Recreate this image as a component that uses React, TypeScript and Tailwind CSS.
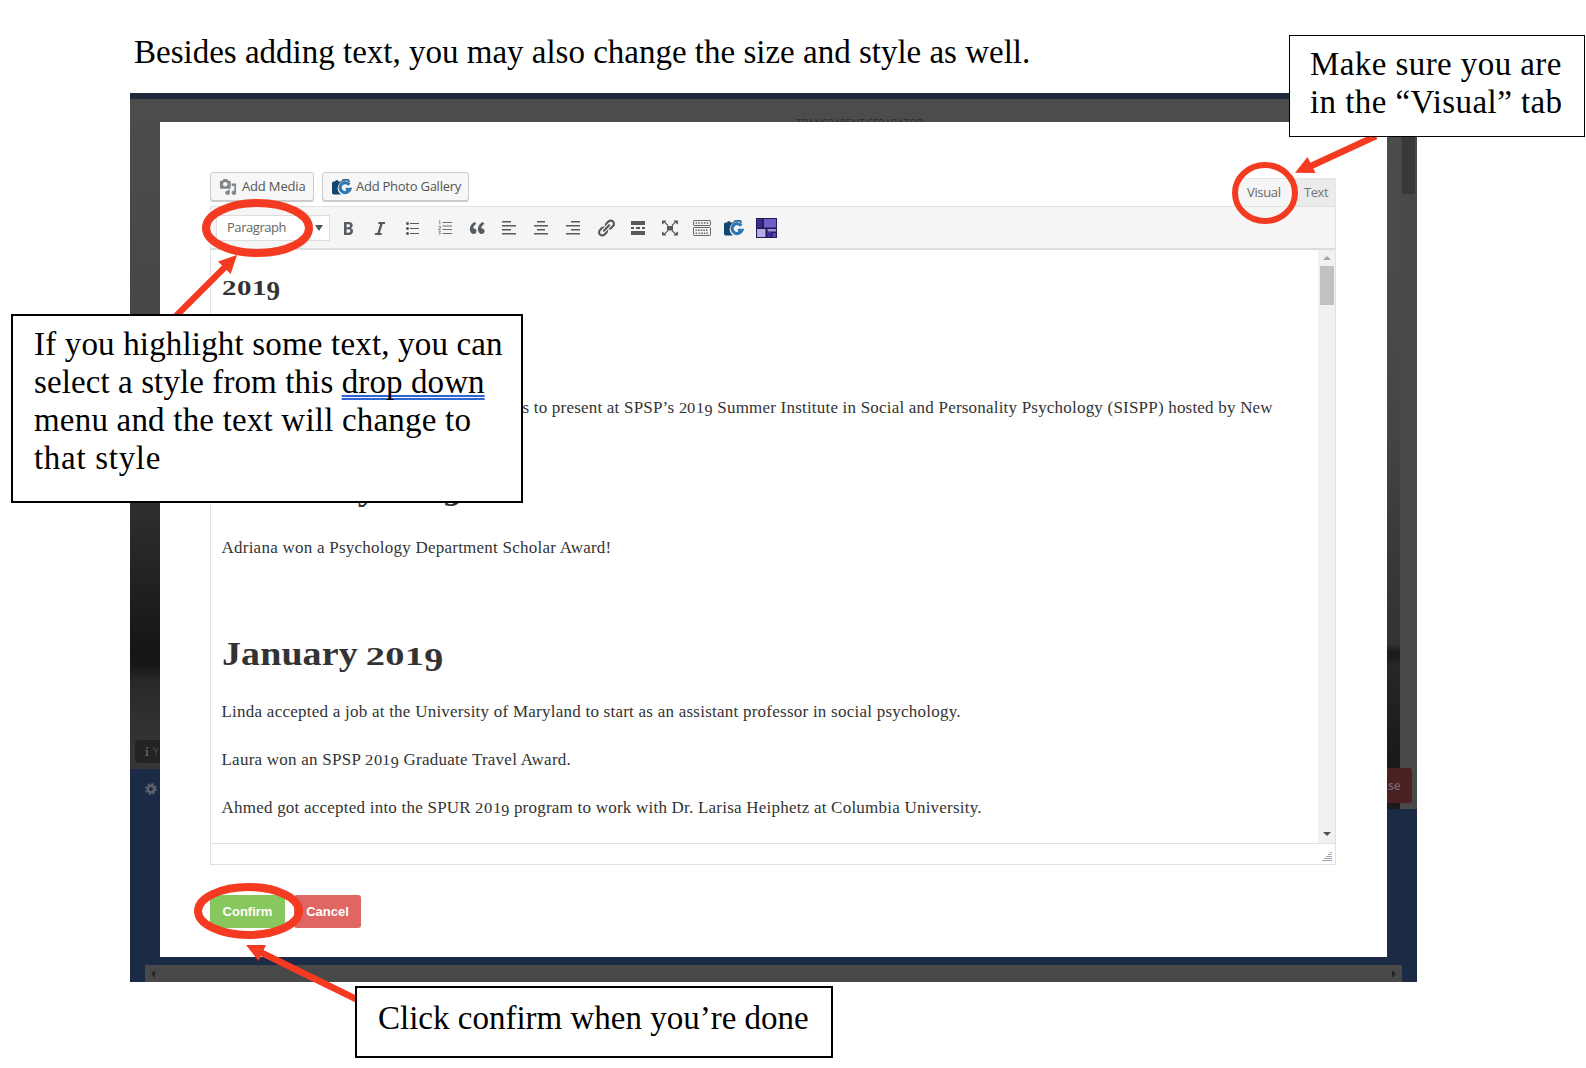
import React, { ReactNode } from "react";

const DASH = {
  bold: "M6 4v13h4.54c1.37 0 2.46-.33 3.26-1 .8-.66 1.2-1.58 1.2-2.77 0-.84-.17-1.51-.51-2.01s-.9-.85-1.67-1.03v-.09c.57-.1 1.02-.4 1.36-.9s.51-1.13.51-1.91c0-1.14-.39-1.98-1.17-2.5C12.75 4.26 11.5 4 9.78 4H6zm2.57 5.15V6.26h1.36c.73 0 1.27.11 1.61.32.34.22.51.58.51 1.07 0 .54-.16.92-.47 1.15s-.82.35-1.51.35h-1.5zm0 2.19h1.6c1.44 0 2.16.53 2.16 1.61 0 .6-.17 1.05-.51 1.34s-.86.43-1.57.43H8.57v-3.38z",
  italic: "M14.78 6h-2.13l-2.8 9h2.12l-.62 2H4.6l.62-2h2.14l2.8-9H8.03l.62-2h6.75z",
  ul: "M5.5 7C4.67 7 4 6.33 4 5.5 4 4.68 4.67 4 5.5 4 6.32 4 7 4.68 7 5.5 7 6.33 6.32 7 5.5 7zM8 5h9v1H8V5zm-2.5 7c-.83 0-1.5-.67-1.5-1.5C4 9.68 4.67 9 5.5 9c.82 0 1.5.68 1.5 1.5 0 .83-.68 1.5-1.5 1.5zM8 10h9v1H8v-1zm-2.5 7c-.83 0-1.5-.67-1.5-1.5 0-.82.67-1.5 1.5-1.5.82 0 1.5.68 1.5 1.5 0 .83-.68 1.5-1.5 1.5zM8 15h9v1H8v-1z",
  quote: "M9.49 13.22c0-.74-.2-1.38-.61-1.9-.62-.78-1.83-.88-2.53-.72-.29-1.65 1.11-3.75 2.92-4.65L7.88 4c-2.73 1.3-5.42 4.28-4.96 8.05C3.21 14.43 4.59 16 6.54 16c.85 0 1.56-.25 2.12-.75s.83-1.18.83-2.03zm8.05 0c0-.74-.2-1.38-.61-1.9-.63-.78-1.83-.88-2.53-.72-.29-1.65 1.11-3.75 2.92-4.65L15.93 4c-2.73 1.3-5.41 4.28-4.95 8.05.28 2.38 1.66 3.95 3.61 3.95.85 0 1.56-.25 2.12-.75s.83-1.18.83-2.03z",
  left: "M12 4.6V3H3v1.6h9zm5 4V7H3v1.6h14zm-5 4V11H3v1.6h9zm5 4V15H3v1.6h14z",
  center: "M14 4.6V3H6v1.6h8zm3 4V7H3v1.6h14zm-3 4V11H6v1.6h8zm3 4V15H3v1.6h14z",
  right: "M17 4.6V3H8v1.6h9zm0 4V7H3v1.6h14zm0 4V11H8v1.6h9zm0 4V15H3v1.6h14z",
  link: "M17.74 2.76c1.68 1.69 1.68 4.41 0 6.1l-1.53 1.52c-1.12 1.12-2.7 1.47-4.14 1.09l2.62-2.61.76-.77.76-.76c.84-.84.84-2.2 0-3.04-.84-.85-2.2-.85-3.04 0l-.77.76-3.38 3.38c-.37-1.44-.02-3.02 1.1-4.14l1.52-1.53c1.69-1.68 4.42-1.68 6.1 0zM8.59 13.43l5.34-5.34c.42-.42.42-1.1 0-1.52-.44-.43-1.13-.39-1.53 0l-5.33 5.34c-.42.42-.42 1.1 0 1.52.44.43 1.13.39 1.52 0zm-.76 2.29l4.14-4.15c.38 1.44.03 3.02-1.09 4.14l-1.52 1.53c-1.69 1.68-4.41 1.68-6.1 0-1.68-1.68-1.68-4.42 0-6.1l1.53-1.52c1.12-1.12 2.7-1.47 4.14-1.1l-4.14 4.15c-.85.84-.85 2.2 0 3.05.84.84 2.2.84 3.04 0z",
  more: "M17 7V3H3v4h14zM6 11V9H3v2h3zm6 0V9H8v2h4zm5 0V9h-3v2h3zm0 6v-4H3v4h14z",
  media: "M13 11V4c0-.55-.45-1-1-1h-1.67L9 1H5L3.67 3H2c-.55 0-1 .45-1 1v7c0 .55.45 1 1 1h10c.55 0 1-.45 1-1zM7 4.5c1.38 0 2.5 1.12 2.5 2.5S8.38 9.5 7 9.5 4.5 8.38 4.5 7 5.62 4.5 7 4.5zM14 6h5v10.5c0 1.38-1.12 2.5-2.5 2.5S14 17.88 14 16.5s1.12-2.5 2.5-2.5c.17 0 .34.02.5.05V9h-3V6zm-4 8.05V13h2v3.5c0 1.38-1.12 2.5-2.5 2.5S7 17.88 7 16.5 8.12 14 9.5 14c.17 0 .34.02.5.05z",
};

function Glyph({ d }: { d: string }) {
  return (
    <svg viewBox="0 0 20 20" className="size-5 fill-[#555b61]">
      <path d={d} />
    </svg>
  );
}

function OrderedList() {
  return (
    <svg viewBox="0 0 20 20" className="size-5" fill="none" stroke="#6b7177">
      <path d="M7.500 4.500h9.500M7.500 8h9.500M7.500 11.500h9.500M7.500 15.500h9.500" strokeWidth="1" />
      <path d="M3.8 3.4l1-.6v3.7M3.5 8.5h2v1.4l-2 1.3h2.2M3.5 13h2l-1 1.5c1.6 0 1.4 2-.9 1.6" strokeWidth=".8" />
    </svg>
  );
}

function Fullscreen() {
  return (
    <svg viewBox="0 0 20 20" className="size-5 fill-[#555b61]">
      <path d="M7 8h6v4.500H7z" />
      <path d="M2 2.500h4.500L5.300 3.900l3.200 3.200-.8.800-3.200-3.200L2 6.500zM18 2.500h-4.500l1.200 1.400-3.200 3.200.8.800 3.200-3.200L18 6.500zM2 17.500h4.500l-1.200-1.400 3.200-3.200-.8-.8-3.200 3.200L2 13.500zM18 17.500h-4.500l1.200-1.400-3.200-3.200.8-.8 3.200 3.200L18 13.500z" />
    </svg>
  );
}

function KitchenSink() {
  return (
    <svg viewBox="0 0 20 20" className="size-5" fill="none" stroke="#62686e">
      <rect x="1.500" y="2.500" width="17" height="5" rx=".6" strokeWidth="1" />
      <rect x="1.500" y="9.500" width="17" height="8" rx=".6" strokeWidth="1" />
      <path d="M3.500 5h13" strokeWidth="1.600" strokeDasharray="1.600 1.200" />
      <path d="M3.500 12.200h13M3.500 15.200h2M6.600 15.200h6.600M14.200 15.200h2.400" strokeWidth="1.600" strokeDasharray="1.600 1" />
    </svg>
  );
}

function CameraG() {
  return (
    <svg viewBox="0 0 20 18" className="h-[18px] w-5">
      <path d="M1.500 3.400h1.700l.4-1.200h2.400l.4 1.200h2.500L11 1h5.500l1.500 2.200-1 5.800-8 7.500H1.800Q0 16.500 0 14.500V5.400Q0 3.400 1.500 3.400z" fill="#12456f" />
      <ellipse cx="13.200" cy="10.300" rx="7.600" ry="7.500" fill="#f7f7f7" />
      <path d="M17.300 6.700A5.100 4.900 0 1 0 18 11.300h-4.200" fill="none" stroke="#2f78b3" strokeWidth="3.200" />
      <path d="M10.500 2.200h5l1.500 1.600" fill="none" stroke="#5f93bf" strokeWidth="1.200" />
    </svg>
  );
}

function Mosaic() {
  return (
    <svg viewBox="0 0 20 20" className="h-[20px] w-[21px]" preserveAspectRatio="none">
      <path d="M0 0h20v20H0z" fill="#241a55" />
      <path d="M1 1h4.500v8.500H1zM10.500 14h4v5h-4z" fill="#3d2f9a" />
      <path d="M7.500 1H19v8.500H7.500z" fill="#6f5fcb" />
      <path d="M1 11h8v8H1z" fill="#b5aee4" />
      <path d="M11 11h8v2.500h-8z" fill="#9c92dc" />
      <path d="M15.500 15H19v4h-3.500z" fill="#5546b4" />
    </svg>
  );
}

/* Text figures: 0-2 sit at x-height, 9 hangs below the baseline. */
function BodyYear() {
  const small = "inline-block w-[8.600px] origin-left scale-x-[1.180] text-[14px] leading-none tracking-normal";
  return (
    <span className="leading-none">
      <span className={small}>2</span>
      <span className={small}>0</span>
      <span className={small}>1</span>
      <span className="relative top-[3px] text-[16px] leading-none">9</span>
    </span>
  );
}

function HeadYear() {
  const small = "inline-block w-[17px] origin-left scale-x-[1.340] text-[25px] leading-none";
  return (
    <span className="leading-none">
      <span className={small}>2</span>
      <span className={small}>0</span>
      <span className={small}>1</span>
      <span className="relative top-[6px] leading-none">9</span>
    </span>
  );
}

function Heading({ month }: { month: string }) {
  return (
    <h2 className="h-10 w-max origin-left scale-x-[1.150] text-[33px] leading-10 font-bold tracking-[0.100px] whitespace-nowrap">
      {month}{" "}
      <span className="ml-[-1.500px] inline-block leading-none">
        <HeadYear />
      </span>
    </h2>
  );
}

function Callout({ className, children }: { className: string; children: ReactNode }) {
  return (
    <div className={"absolute border-black bg-white font-['Liberation_Serif',serif] text-[33px] leading-[38px] whitespace-nowrap text-black " + className}>
      {children}
    </div>
  );
}

function Marks() {
  return (
    <svg viewBox="0 0 1586 1068" className="pointer-events-none absolute inset-0 h-[1068px] w-[1586px]" fill="none" stroke="#f43a20">
      <ellipse cx="1265" cy="193" rx="30" ry="28" strokeWidth="6" />
      <ellipse cx="257.500" cy="228" rx="51.500" ry="25" strokeWidth="8" />
      <ellipse cx="248.500" cy="911" rx="50.500" ry="24" strokeWidth="8" />
      <path d="M1376 136L1311 166M176 316L226 266M358 1000L260 952" strokeWidth="6.500" />
      <path d="M1295 172.700L1307.500 157L1315.500 173zM237 255L218 261.500L230.700 274zM246 945L266 945L258.500 961z" fill="#f43a20" stroke="none" />
    </svg>
  );
}

export default function App() {
  return (
    <div className="relative h-[1068px] w-[1586px] overflow-hidden bg-white">
      <p className="h-[93px] pt-[33px] pl-[134px] font-['Liberation_Serif',serif] text-[33px] leading-[38px] whitespace-nowrap text-black">
        Besides adding text, you may also change the size and style as well.
      </p>

      <div className="ml-[130px] flex h-[889px] w-[1287px] flex-col bg-[#1c2b45]">
        <div className="h-[6px] bg-[#212a3b]" />
        <div className="h-[23px] overflow-hidden bg-[#4c4c4c] pt-[17px] pl-[666px] font-['Open_Sans',sans-serif] text-[10.500px] leading-[14px] tracking-[-0.250px] text-[#2c2c2c]">
          TRANSPARENT SEPARATOR
        </div>
        <div className="flex h-[835px]">
          <div className="flex w-[30px] flex-col">
            <div className="flex h-[647px] flex-col justify-end bg-[linear-gradient(#4c4c4c_0%,#464646_31%,#303030_58%,#151515_82%,#171717_84%,#29292b_86.500%,#303033_92%,#363638_100%)] pb-[6px] pl-[5px]">
              <div className="flex h-[23px] items-center gap-1 rounded-l bg-[#222324] pl-[10px] font-['Open_Sans',sans-serif] text-[11px] text-[#4a4b4d]">
                <svg viewBox="0 0 4 9" className="h-[9px] w-1 shrink-0 fill-[#55575a]">
                  <path d="M1 0h2v2H1zM0 3h3v5h1v1H0V8h1V4H0z" />
                </svg>
                <span className="w-[5px] overflow-hidden">Y</span>
              </div>
            </div>
            <div className="pt-[14px] pl-[15px]">
              <svg viewBox="0 0 12 12" className="size-3" fill="none" stroke="#5d6168">
                <circle cx="6" cy="6" r="3.200" strokeWidth="2.600" />
                <circle cx="6" cy="6" r="5.200" strokeWidth="1.600" strokeDasharray="2.040 2.040" />
              </svg>
            </div>
          </div>

          <div className="flex w-[1227px] flex-col bg-white px-[50px] pt-[50px]">
            <div className="flex h-[34px] w-[1126px] items-start justify-between font-['Open_Sans',sans-serif] text-[13px] text-[#555]">
              <div className="flex gap-2">
                <button className="flex h-[29px] w-[104px] items-center gap-[5px] rounded-[3px] border border-[#ccc] bg-[#f7f7f7] pl-2 tracking-[-0.160px] whitespace-nowrap shadow-[0_1px_0_#ccc]">
                  <svg viewBox="0 0 20 20" className="size-[18px] shrink-0 fill-[#82878c]">
                    <path d={DASH.media} />
                  </svg>
                  Add Media
                </button>
                <button className="flex h-[29px] w-[147px] items-center gap-[4px] rounded-[3px] border border-[#ccc] bg-[#f7f7f7] pl-[9px] tracking-[-0.250px] whitespace-nowrap shadow-[0_1px_0_#ccc]">
                  <CameraG />
                  Add Photo Gallery
                </button>
              </div>
              <div className="mt-[6px] flex h-[29px] text-[#666]">
                <div className="flex w-[61px] items-center border border-b-0 border-[#e5e5e5] bg-[#f5f5f5] pl-[11px] tracking-[-0.350px]">Visual</div>
                <div className="flex w-[40px] items-center border border-b-0 border-[#e5e5e5] bg-[#ebebeb] pl-[7px] tracking-[-0.450px] text-[#777]">Text</div>
              </div>
            </div>

            <div className="flex h-[659px] w-[1126px] flex-col border border-[#e1e1e1]">
              <div className="flex h-[43px] items-center border-b-2 border-[#dcdcdc] bg-[#f5f5f5] pl-[5px]">
                <div className="mr-[8px] flex h-[26px] w-[114px] items-center justify-between border border-[#ddd] bg-white pr-[6px] pl-[10px] font-['Open_Sans',sans-serif] text-[13px] tracking-[-0.450px] text-[#666]">
                  Paragraph
                  <svg viewBox="0 0 8 6" className="h-[6px] w-2 fill-[#50575e]">
                    <path d="M0 0h8L4 6z" />
                  </svg>
                </div>
                <div className="flex gap-[12.200px]">
                  <Glyph d={DASH.bold} />
                  <Glyph d={DASH.italic} />
                  <Glyph d={DASH.ul} />
                  <OrderedList />
                  <Glyph d={DASH.quote} />
                  <Glyph d={DASH.left} />
                  <Glyph d={DASH.center} />
                  <Glyph d={DASH.right} />
                  <Glyph d={DASH.link} />
                  <Glyph d={DASH.more} />
                  <Fullscreen />
                  <KitchenSink />
                  <div className="flex items-center"><CameraG /></div>
                  <Mosaic />
                </div>
              </div>

              <div className="flex h-[593px]">
                <div className="flex-1 overflow-hidden pt-[20px] pl-[10.500px] font-['Liberation_Serif',serif] text-[17px] leading-6 tracking-[0.240px] whitespace-nowrap text-[#333]">
                  <h3 className="mb-[94px] h-8 w-max text-[27px] leading-8 font-bold tracking-normal">
                    <span className="inline-block w-[15px] origin-left scale-x-[1.450] text-[20px] leading-none">2</span>
                    <span className="inline-block w-[15px] origin-left scale-x-[1.450] text-[20px] leading-none">0</span>
                    <span className="inline-block w-[15px] origin-left scale-x-[1.450] text-[20px] leading-none">1</span>
                    <span className="relative top-[5px] leading-none">9</span>
                  </h3>
                  <p className="mb-[49px] h-6 pl-[301px] tracking-[0.205px]">
                    s to present at SPSP’s <BodyYear /> Summer Institute in Social and Personality Psychology (SISPP) hosted by New
                  </p>
                  <Heading month="February" />
                  <p className="mt-[27px] mb-[74px] h-6">Adriana won a Psychology Department Scholar Award!</p>
                  <Heading month="January" />
                  <p className="mt-[25.500px] mb-6 h-6">Linda accepted a job at the University of Maryland to start as an assistant professor in social psychology.</p>
                  <p className="mb-6 h-6">
                    Laura won an SPSP <BodyYear /> Graduate Travel Award.
                  </p>
                  <p className="h-6 tracking-[0.225px]">
                    Ahmed got accepted into the SPUR <BodyYear /> program to work with Dr. Larisa Heiphetz at Columbia University.
                  </p>
                </div>
                <div className="flex w-[17px] flex-col items-center bg-[#f1f1f1] pt-[6px] pb-[7px]">
                  <svg viewBox="0 0 8 4" className="h-1 w-2 fill-[#a3a3a3]">
                    <path d="M0 4h8L4 0z" />
                  </svg>
                  <div className="mt-[6px] mb-auto h-[39px] w-[14px] bg-[#c1c1c1]" />
                  <svg viewBox="0 0 8 4" className="h-1 w-2 fill-[#505050]">
                    <path d="M0 0h8L4 4z" />
                  </svg>
                </div>
              </div>

              <div className="flex h-[21px] items-end justify-end border-t border-[#e1e1e1] pr-[3px] pb-[2px]">
                <svg viewBox="0 0 10 10" className="size-[10px]" stroke="#a99db5" strokeWidth="1">
                  <path d="M8 .5h2M6 2.500h4M4 4.500h6M2 6.500h8M0 8.500h10" />
                </svg>
              </div>
            </div>

            <div className="mt-[30px] flex gap-[9px] font-['Liberation_Sans',sans-serif] text-[13px] font-bold text-white">
              <button className="h-[33px] w-[75px] rounded-[3px] bg-[#88c65e]">Confirm</button>
              <button className="h-[33px] w-[67px] rounded-[3px] bg-[#de6763]">Cancel</button>
            </div>
          </div>

          <div className="relative flex w-[30px] flex-col">
            <div className="flex h-[687px]">
              <div className="w-[13px] bg-[linear-gradient(#4c4c4c_0%,#494949_30%,#434343_48%,#3b3a39_60%,#323232_76%,#1c1c1c_77%,#1c1c1c_78%,#272727_79%,#1b1a19_92%,#1b1a19_100%)]" />
              <div className="flex-1 bg-[#494949] px-[2px]">
                <div className="h-[72px] w-[13px] bg-[#393939]" />
              </div>
            </div>
            <div className="absolute top-[646px] left-0 h-[35px] w-[25px] rounded-r-[3px] bg-[#4a2022] pl-[1px] font-['Open_Sans',sans-serif] text-[12px] leading-[36px] font-semibold text-[#77696d]">
              se
            </div>
          </div>
        </div>
        <div className="mt-[8px] ml-[15px] flex h-[17px] w-[1257px] items-center justify-between bg-[#484848] px-[6px]">
          <svg viewBox="0 0 4 8" className="h-2 w-1 fill-[#262626]">
            <path d="M4 0v8L0 4z" />
          </svg>
          <svg viewBox="0 0 4 8" className="h-2 w-1 fill-[#262626]">
            <path d="M0 0v8l4-4z" />
          </svg>
        </div>
      </div>

      <Marks />

      <Callout className="top-[35px] left-[1289px] h-[102px] w-[296px] border pt-[9px] pl-[20px] tracking-[0.420px]">
        <p>Make sure you are</p>
        <p>in the “Visual” tab</p>
      </Callout>
      <Callout className="top-[314px] left-[11px] h-[189px] w-[512px] border-2 pt-[9px] pl-[21px]">
        <p className="tracking-[0.170px]">If you highlight some text, you can</p>
        <p className="tracking-[0.100px]">
          select a style from this{" "}
          <span className="underline decoration-[#2f65d4] decoration-double decoration-2 underline-offset-[2px] [text-decoration-skip-ink:none]">drop down</span>
        </p>
        <p className="tracking-[0.200px]">menu and the text will change to</p>
        <p className="tracking-[0.700px]">that style</p>
      </Callout>
      <Callout className="top-[986px] left-[355px] h-[72px] w-[478px] border-2 pt-[11px] pl-[21px]">
        <p>Click confirm when you’re done</p>
      </Callout>
    </div>
  );
}
